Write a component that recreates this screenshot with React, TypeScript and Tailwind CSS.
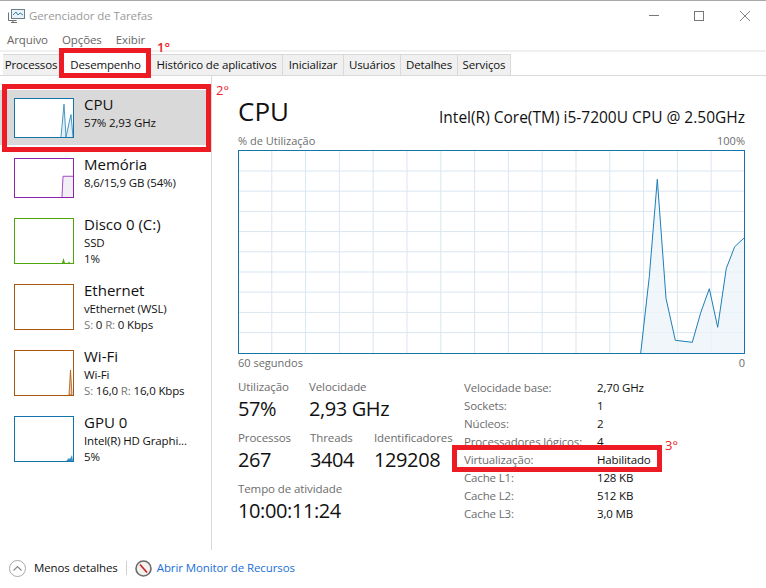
import React from "react";

const tabs = [
  { label: "Processos", w: "w-[57px]" },
  { label: "Desempenho", w: "w-[91px]", active: true },
  { label: "Histórico de aplicativos", w: "w-[132px]" },
  { label: "Inicializar", w: "w-[61px]" },
  { label: "Usuários", w: "w-[57px]" },
  { label: "Detalhes", w: "w-[57px]" },
  { label: "Serviços", w: "w-[53px]" },
];

const specs = [
  ["Velocidade base:", "2,70 GHz"],
  ["Sockets:", "1"],
  ["Núcleos:", "2"],
  ["Processadores lógicos:", "4"],
  ["Virtualização:", "Habilitado"],
  ["Cache L1:", "128 KB"],
  ["Cache L2:", "512 KB"],
  ["Cache L3:", "3,0 MB"],
];

const Thumb = ({ color, tall, children }: { color: string; tall?: boolean; children?: React.ReactNode }) => (
  <div className={`w-[60px] shrink-0 border ${color} ${tall ? "h-[46px]" : "h-[40px]"} bg-white`}>
    <svg viewBox="0 0 58 44" preserveAspectRatio="none" className="h-full w-full">
      {children}
    </svg>
  </div>
);

const SideItem = ({
  name,
  lines,
  thumb,
  tall,
  selected,
}: {
  name: string;
  lines: React.ReactNode[];
  thumb: React.ReactNode;
  tall?: boolean;
  selected?: boolean;
}) => (
  <div className={`mb-[5px] flex gap-[10px] pl-[14px] pt-2 ${tall ? "h-[61px]" : "h-[55px]"} ${selected ? "bg-[#d9d9d9]" : ""}`}>
    {thumb}
    <div className="-mt-[4px] min-w-0">
      <div className="text-[15px] leading-[21px] text-[#111]">{name}</div>
      {lines.map((l, i) => (
        <div key={i} className="text-[11.5px] leading-[16px] tracking-[-0.15px] text-[#111]">{l}</div>
      ))}
    </div>
  </div>
);

const Stat = ({ label, value, className }: { label: string; value: string; className: string }) => (
  <div className={className}>
    <div className="text-[11.5px] leading-[16px] tracking-[-0.1px] text-[#6d6d6d]">{label}</div>
    <div className="text-[20px] leading-[28px] tracking-[-0.4px] text-[#111]">{value}</div>
  </div>
);

const CpuGraph = () => {
  const line = "640.7,353 649.3,276.7 657.3,179.3 666,298.3 675.3,340.3 692.3,342.3 700.7,312.7 709.3,288.7 717.7,327.3 726.3,268.3 734.7,246.7 744,238";
  return (
    <svg viewBox="238 150 507 204" className="h-[204px] w-[507px]">
      {Array.from({ length: 14 }, (_, i) => (
        <line key={i} x1={271.8 + i * 33.8} x2={271.8 + i * 33.8} y1="150" y2="353" stroke="#d9e6f0" />
      ))}
      {Array.from({ length: 9 }, (_, i) => (
        <line key={i} x1="238" x2="744" y1={171 + i * 20.2} y2={171 + i * 20.2} stroke="#d9e6f0" />
      ))}
      <polygon points={`${line} 744,353`} fill="#eef4f9" fillOpacity="0.8" />
      <polyline points={line} fill="none" stroke="#1c7fb8" strokeWidth="1" />
      <rect x="238.5" y="150.5" width="506" height="203" fill="none" stroke="#1473a8" />
    </svg>
  );
};

export default function App() {
  return (
    <div className="relative h-[588px] w-[766px] overflow-hidden bg-white font-['Open_Sans',sans-serif] text-[#111]">
      {/* title bar */}
      <div className="h-px bg-[#a8a8a8]" />
      <div className="flex h-[29px] items-center pl-2">
        <svg width="17" height="16" viewBox="0 0 17 16" fill="none">
          <rect x="3.5" y="1.5" width="13" height="9" fill="#eaf2f8" stroke="#6a7f8c" />
          <path d="M5 7l3-3 2 3 2-2 3 2" stroke="#3b84b0" />
          <path d="M0.5 4.5v8h8M5 12.5v2M3 14.5h6" stroke="#6f6f6f" />
        </svg>
        <span className="ml-1 text-[11.5px] tracking-[-0.1px] text-[#9a9a9a]">Gerenciador de Tarefas</span>
        <div className="ml-auto flex items-center pr-4">
          <span className="mr-[35px] h-px w-[10px] bg-[#777]" />
          <span className="mr-[36px] h-[10px] w-[10px] border border-[#777]" />
          <svg width="10" height="10" viewBox="0 0 10 10" stroke="#777" strokeWidth="0.9">
            <path d="M0 0l10 10M10 0L0 10" />
          </svg>
        </div>
      </div>

      {/* menu */}
      <div className="flex h-[20px] items-center gap-[14px] pl-[7px] text-[11.5px] tracking-[-0.1px] text-[#666]">
        <span>Arquivo</span>
        <span>Opções</span>
        <span>Exibir</span>
      </div>
      <div className="h-[2px] bg-[#f0f0f0]" />

      {/* tabs */}
      <div className="flex h-[24px] items-end border-b border-[#d9d9d9] pl-[3px]">
        {tabs.map((t) => (
          <div
            key={t.label}
            className={`flex h-[21px] items-center justify-center text-[11.5px] tracking-[-0.15px] ${t.w} ${
              t.active ? "bg-white" : "border border-b-0 border-l-0 border-[#d9d9d9] bg-[#f0f0f0]"
            }`}
          >
            {t.label}
          </div>
        ))}
      </div>

      <div className="flex h-[474px]">
        {/* sidebar */}
        <div className="w-[212px] shrink-0 border-r border-[#d9d9d9] pt-[14px]">
          <SideItem
            selected
            name="CPU"
            lines={["57%  2,93 GHz"]}
            thumb={
              <Thumb color="border-[#1473a8]">
                <polygon points="47,44 49,6 51,44 54,28 56,18 58,44" fill="#e3edf4" />
                <polyline points="46,44 49,6 51,44 54,28 56,18 58,44" fill="none" stroke="#3b8fc0" />
              </Thumb>
            }
          />
          <SideItem
            name="Memória"
            lines={["8,6/15,9 GB (54%)"]}
            thumb={
              <Thumb color="border-[#8e24aa]">
                <polygon points="47,44 48,20 58,20 58,44" fill="#f2eef5" />
                <polyline points="47,44 48,20 58,20" fill="none" stroke="#9c3fc0" />
              </Thumb>
            }
          />
          <SideItem
            tall
            name="Disco 0 (C:)"
            lines={["SSD", "1%"]}
            thumb={
              <Thumb tall color="border-[#4ea60e]">
                <polygon points="47,44 48.5,39 50,44 53,44 54,42.5 55,44" fill="#4ea60e" />
              </Thumb>
            }
          />
          <SideItem
            tall
            name="Ethernet"
            lines={["vEthernet (WSL)", <><span className="text-[#777]">S:</span> 0 <span className="text-[#777]">R:</span> 0 Kbps</>]}
            thumb={<Thumb tall color="border-[#a7560f]" />}
          />
          <SideItem
            tall
            name="Wi-Fi"
            lines={["Wi-Fi", <><span className="text-[#777]">S:</span> 16,0 <span className="text-[#777]">R:</span> 16,0 Kbps</>]}
            thumb={
              <Thumb tall color="border-[#a7560f]">
                <polygon points="54,44 55.5,19 57,44" fill="#e8c9ab" stroke="#a7560f" strokeWidth="0.8" />
              </Thumb>
            }
          />
          <SideItem
            tall
            name="GPU 0"
            lines={["Intel(R) HD Graphi...", "5%"]}
            thumb={
              <Thumb tall color="border-[#1473a8]">
                <polygon points="51,44 54,41 55,42 57,38 58,44" fill="#3b8fc0" />
              </Thumb>
            }
          />
        </div>

        {/* detail pane */}
        <div className="min-w-0 flex-1 pl-[26px] pr-[21px]">
          <div className="flex h-[53px] items-end justify-between">
            <div className="text-[26px] leading-[36px]">CPU</div>
            <div className="pb-[2px] text-[15.5px] leading-[20px]">Intel(R) Core(TM) i5-7200U CPU @ 2.50GHz</div>
          </div>
          <div className="mt-[3px] flex h-[18px] items-center justify-between text-[11px] text-[#6d6d6d]">
            <span>% de Utilização</span>
            <span>100%</span>
          </div>
          <div className="h-[204px]">
            <CpuGraph />
          </div>
          <div className="flex h-[18px] items-center justify-between text-[11px] text-[#6d6d6d]">
            <span>60 segundos</span>
            <span>0</span>
          </div>

          <div className="mt-[7px] flex">
            <div className="w-[226px]">
              <div className="flex">
                <Stat className="w-[71px]" label="Utilização" value="57%" />
                <Stat className="" label="Velocidade" value="2,93 GHz" />
              </div>
              <div className="mt-[7px] flex">
                <Stat className="w-[72px]" label="Processos" value="267" />
                <Stat className="w-[64px]" label="Threads" value="3404" />
                <Stat className="" label="Identificadores" value="129208" />
              </div>
              <Stat className="mt-[7px]" label="Tempo de atividade" value="10:00:11:24" />
            </div>
            <div className="min-w-0 flex-1 text-[11.5px] tracking-[-0.15px]">
              {specs.map(([k, v]) => (
                <div key={k} className="flex h-[18px] items-center">
                  <span className="w-[133px] shrink-0 text-[#6d6d6d]">{k}</span>
                  <span>{v}</span>
                </div>
              ))}
            </div>
          </div>
        </div>
      </div>

      {/* footer */}
      <div className="absolute bottom-[9px] left-[9px] flex h-[22px] items-center text-[11.5px] tracking-[-0.1px]">
        <svg width="17" height="17" viewBox="0 0 17 17" fill="none">
          <circle cx="8.5" cy="8.5" r="8" stroke="#a8a8a8" />
          <path d="M4.5 10.5l4-4 4 4" stroke="#8a8a8a" strokeWidth="1.2" />
        </svg>
        <span className="ml-2 text-[#111]">Menos detalhes</span>
        <span className="ml-2 h-[14px] w-px bg-[#d0d0d0]" />
        <svg className="ml-[8px]" width="17" height="17" viewBox="0 0 17 17" fill="none">
          <circle cx="8.5" cy="8.5" r="7.5" fill="#f4f1ec" stroke="#6b6b6b" strokeWidth="1.6" />
          <path d="M5 4.5l7 8" stroke="#c8202a" strokeWidth="1.6" />
        </svg>
        <span className="ml-[5px] text-[#1a6fd6]">Abrir Monitor de Recursos</span>
      </div>

      {/* red annotations */}
      <div className="absolute left-[59px] top-[48px] h-[30px] w-[92px] border-[5px] border-[#ed1c24]" />
      <div className="absolute left-[2px] top-[84px] h-[68px] w-[209px] border-[5px] border-[#ed1c24]" />
      <div className="absolute left-[452px] top-[445px] h-[27px] w-[210px] border-[5px] border-[#ed1c24]" />
      <span className="absolute left-[157px] top-[38px] text-[13px] font-semibold text-[#ed1c24]">1°</span>
      <span className="absolute left-[216px] top-[81px] text-[13px] text-[#ed1c24]">2°</span>
      <span className="absolute left-[665px] top-[436px] text-[13px] text-[#ed1c24]">3°</span>
    </div>
  );
}
